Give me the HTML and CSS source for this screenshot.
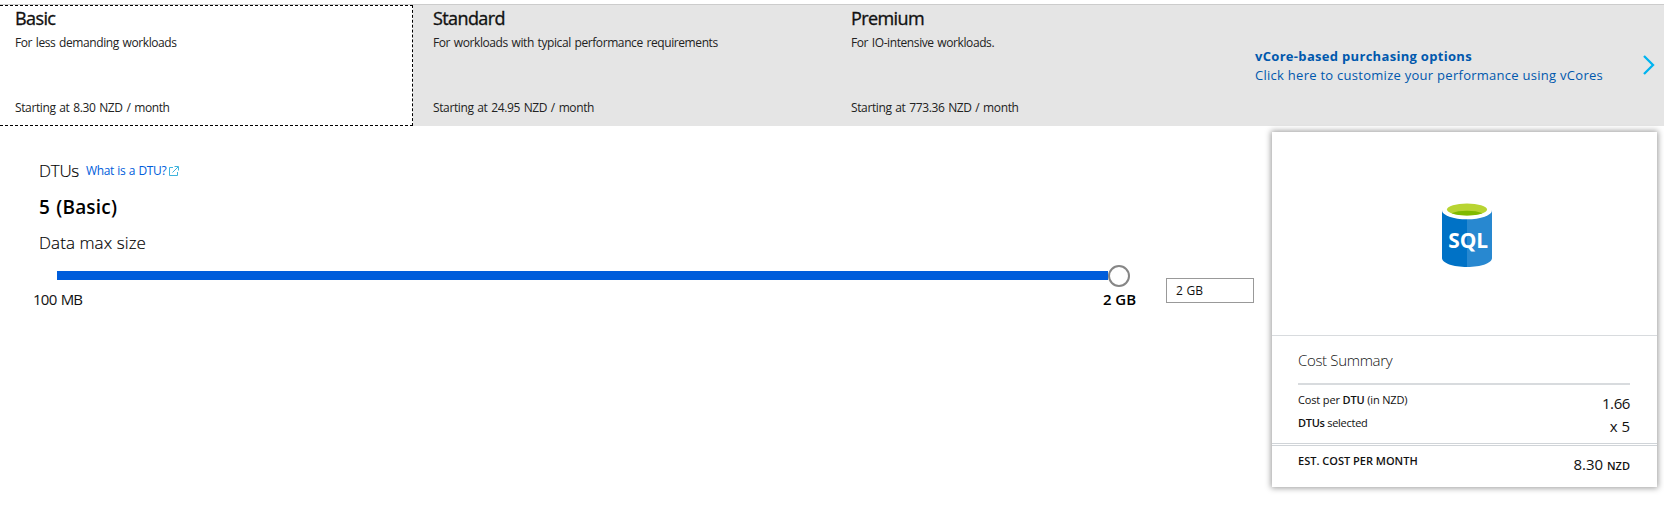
FILE: index.html
```
<!DOCTYPE html>
<html lang="en">
<head>
<meta charset="utf-8">
<title>Configure performance</title>
<link rel="stylesheet" href="styles.css">
</head>
<body>
<header class="tiers">
  <section class="tier selected">
    <h2 class="tier-name">Basic</h2>
    <p class="tier-text">For less demanding workloads</p>
    <p class="tier-text price">Starting at 8.30 NZD / month</p>
  </section>
  <section class="tier">
    <h2 class="tier-name">Standard</h2>
    <p class="tier-text">For workloads with typical performance requirements</p>
    <p class="tier-text price">Starting at 24.95 NZD / month</p>
  </section>
  <section class="tier">
    <h2 class="tier-name">Premium</h2>
    <p class="tier-text">For IO-intensive workloads.</p>
    <p class="tier-text price">Starting at 773.36 NZD / month</p>
  </section>
  <a class="vcore">
    <span class="vcore-text"><b class="vcore-title">vCore-based purchasing options</b><span class="vcore-sub">Click here to customize your performance using vCores</span></span>
    <svg class="chevron" width="13" height="22" viewBox="0 0 13 22"><path d="M2 1L11 10L2 19" fill="none" stroke="#00b4f0" stroke-width="2.300"/></svg>
  </a>
</header>
<main class="content">
  <section class="config">
    <div class="dtu-row"><span class="dtu-label">DTUs</span><a class="help"><span>What is a DTU?</span><svg width="10" height="10" viewBox="0 0 10 10"><path d="M4 1.500H.5V9.500H8.500V6M3.500 6.500L9 1M5.500 .5H9.500V4.500" fill="none" stroke="#3fb4dc"/></svg></a></div>
    <div class="dtu-value">5 (Basic)</div>
    <div class="size-label">Data max size</div>
    <div class="slider-row">
      <div class="slider">
        <div class="track"><span class="fill"></span><span class="thumb"></span></div>
        <div class="limits"><span class="min">100 MB</span><span class="max">2 GB</span></div>
      </div>
      <div class="size-input">2 GB</div>
    </div>
  </section>
  <aside class="card">
    <div class="hero">
      <svg width="50" height="64" viewBox="0 0 50 64">
        <path d="M0 7V55C0 60 11 64 25 64V7Z" fill="#0072c6"/>
        <path d="M25 7V64C39 64 50 60 50 55V7Z" fill="#2888d0"/>
        <ellipse cx="25" cy="7.500" rx="25" ry="8.800" fill="#fff"/>
        <ellipse cx="25" cy="6.500" rx="20" ry="6" fill="#b8d432"/>
        <path d="M9.500 10.300C17 7 33 7 40.500 10.300C33 13.300 17 13.300 9.500 10.300Z" fill="#7fba00"/>
        <text class="sql" x="26.200" y="44.500" text-anchor="middle" textLength="40" lengthAdjust="spacingAndGlyphs">SQL</text>
      </svg>
    </div>
    <div class="summary">
      <h3 class="summary-title">Cost Summary</h3>
      <div class="row"><span class="key">Cost per <b>DTU</b> (in NZD)</span><span class="val unit-price">1.66</span></div>
      <div class="row"><span class="key selected-count"><b>DTUs</b> selected</span><span class="val">x 5</span></div>
    </div>
    <div class="row total"><span class="key"><b>EST. COST PER MONTH</b></span><span class="val">8.30 <b class="cur">NZD</b></span></div>
  </aside>
</main>
</body>
</html>
```
FILE: styles.css
```
* { box-sizing: border-box; }
body { margin: 0; min-height: 506px; padding-top: 4px; background: #fff; color: #111; font-family: "Open Sans", "Noto Sans", sans-serif; font-size: 12px; }
h2, h3, p { margin: 0; font-weight: 400; }
.tiers { display: flex; gap: 5px; height: 122px; border-top: 1px solid #ccc; background: #e5e5e5; }
.tier { display: flex; flex-direction: column; width: 413px; flex: none; padding: 0 15px 7px; border: 1px solid transparent; border-left: 0; }
.tier.selected { background: #fff; border: 1px dashed #000; border-left: 0; }
.tier-name { font-size: 18px; line-height: 24px; letter-spacing: -.6px; -webkit-text-stroke: .35px #111; }
.tier-text { margin-top: 3px; line-height: 20px; letter-spacing: -.41px; word-spacing: 1px; white-space: nowrap; color: #222; }
.tier-text.price { margin-top: auto; letter-spacing: -.38px; }
.vcore { display: flex; flex: 1; align-items: center; justify-content: space-between; padding: 0 9px 0 1px; color: #0058ad; white-space: nowrap; }
.vcore-text { display: flex; flex-direction: column; font-size: 13px; line-height: 19px; }
.vcore-title { letter-spacing: .309px; }
.vcore-sub { letter-spacing: .272px; }
.content { display: flex; justify-content: space-between; padding-right: 7px; }
.config { padding: 29px 0 0 39px; }
.dtu-row { display: flex; align-items: center; height: 32px; font-size: 17px; line-height: 32px; font-weight: 300; color: #000; }
.dtu-label { letter-spacing: -.27px; -webkit-text-stroke: .15px #000; }
.help { display: flex; align-items: center; gap: 3px; margin: 0 0 1px 7px; font-size: 12px; font-weight: 400; line-height: 20px; letter-spacing: -.35px; word-spacing: .6px; color: #005ddb; }
.dtu-value { margin-top: 4px; font-size: 19px; line-height: 32px; font-weight: 600; letter-spacing: .2px; word-spacing: 1px; color: #000; }
.size-label { margin-top: 4px; font-size: 17px; line-height: 32px; font-weight: 300; letter-spacing: .079px; color: #000; -webkit-text-stroke: .15px #000; }
.slider-row { display: flex; }
.slider { width: 1104px; margin-left: -6px; padding-top: 12px; }
.track { display: flex; align-items: center; height: 9px; margin-left: 24px; }
.fill { width: 1051px; height: 9px; background: #005ddb; }
.thumb { width: 22px; height: 22px; flex: none; border: 2px solid #868686; border-radius: 50%; background: #fff; }
.limits { display: flex; justify-content: space-between; margin-top: 9px; padding-right: 1px; font-size: 15px; line-height: 20px; }
.min { letter-spacing: -.75px; word-spacing: 1px; }
.max { font-weight: 600; letter-spacing: -.06px; color: #000; }
.size-input { width: 88px; height: 25px; margin: 19px 0 0 29px; padding-left: 9px; border: 1px solid #999; font-size: 12px; line-height: 24px; letter-spacing: .2px; }
.card { width: 385px; height: 355px; margin-top: 6px; background: #fff; box-shadow: 0 0 6px 1px rgba(0, 0, 0, .4); }
.hero { display: flex; justify-content: center; height: 204px; padding: 71px 0 0 5px; border-bottom: 1px solid #d8dbde; }
.sql { font: 700 22px "Open Sans", sans-serif; fill: #fff; }
.summary { margin: 0 27px 0 26px; }
.summary-title { height: 49px; padding-top: 11px; border-bottom: 2px solid #d8dbde; font-size: 15px; line-height: 26px; font-weight: 300; letter-spacing: -.33px; }
.row { display: flex; justify-content: space-between; height: 23px; }
.key { padding-top: 5px; font-size: 11px; line-height: 20px; letter-spacing: -.15px; }
.selected-count { letter-spacing: -.28px; }
.key b { font-weight: 600; }
.val { padding-top: 8px; font-size: 15px; line-height: 20px; }
.unit-price { letter-spacing: -.4px; }
.total { height: 44px; margin-top: 12px; padding: 0 27px 0 26px; border-top: 3px double #d0d4d8; }
.total .key { letter-spacing: 0; }
.cur { font-size: 11px; font-weight: 600; }
```
